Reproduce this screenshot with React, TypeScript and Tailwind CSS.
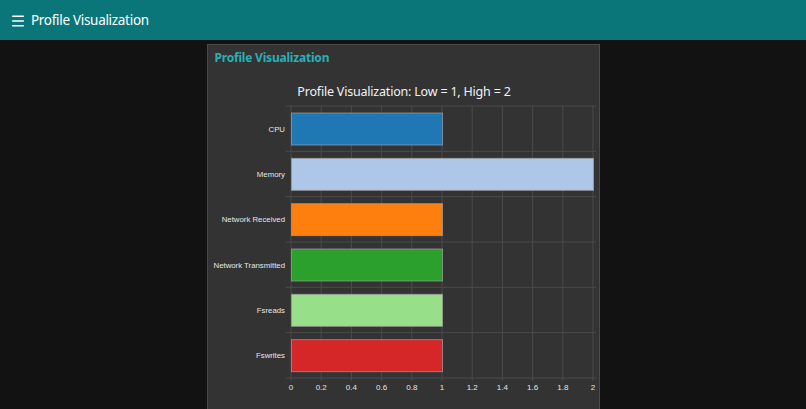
import { Menu } from "lucide-react";

interface Metric {
  name: string;
  value: number;
  color: string;
}

const metrics: Metric[] = [
  { name: "CPU", value: 1, color: "#1f77b4" },
  { name: "Memory", value: 2, color: "#aec7e8" },
  { name: "Network Received", value: 1, color: "#ff7f0e" },
  { name: "Network Transmitted", value: 1, color: "#2ca02c" },
  { name: "Fsreads", value: 1, color: "#98df8a" },
  { name: "Fswrites", value: 1, color: "#d62728" },
];

const ticks = [0, 0.2, 0.4, 0.6, 0.8, 1, 1.2, 1.4, 1.6, 1.8, 2];

// plot geometry (svg space)
const X0 = 83;
const UNIT = 151;
const TOP = 31;
const BAND = 45.33;
const BOTTOM = TOP + BAND * metrics.length;

function BarChart() {
  return (
    <svg width={391} height={340} className="block">
      <text
        x={196}
        y={21}
        textAnchor="middle"
        fill="#f2f2f2"
        fontSize={12.5}
        letterSpacing={-0.2}
        fontFamily="'Noto Sans', sans-serif"
      >
        Profile Visualization: Low = 1, High = 2
      </text>

      {/* grid */}
      {ticks.map((t) => (
        <line
          key={`v${t}`}
          x1={X0 + t * UNIT}
          x2={X0 + t * UNIT}
          y1={TOP}
          y2={BOTTOM + 3}
          stroke="#4b4b4b"
          strokeWidth={1}
        />
      ))}
      {metrics.map((_, i) => (
        <line
          key={`h${i}`}
          x1={X0 - 5}
          x2={X0 + 2 * UNIT + 3}
          y1={TOP + BAND * i}
          y2={TOP + BAND * i}
          stroke="#4b4b4b"
          strokeWidth={1}
        />
      ))}
      <line x1={X0 - 5} x2={X0 + 2 * UNIT + 3} y1={BOTTOM} y2={BOTTOM} stroke="#4b4b4b" />

      {/* bars */}
      {metrics.map((m, i) => (
        <g key={m.name}>
          <rect
            x={X0 + 0.5}
            y={TOP + BAND * i + 7}
            width={m.value * UNIT}
            height={32}
            fill={m.color}
            stroke="rgba(160,160,160,0.7)"
            strokeWidth={1}
          />
          <text
            x={77}
            y={TOP + BAND * i + BAND / 2 + 3}
            textAnchor="end"
            fill="#e6e6e6"
            fontSize={7.8}
            fontFamily="'Liberation Sans', Arial, sans-serif"
          >
            {m.name}
          </text>
        </g>
      ))}

      {/* x ticks */}
      {ticks.map((t) => (
        <text
          key={`t${t}`}
          x={X0 + t * UNIT}
          y={BOTTOM + 12}
          textAnchor="middle"
          fill="#e6e6e6"
          fontSize={8}
          fontFamily="'Liberation Sans', Arial, sans-serif"
        >
          {t}
        </text>
      ))}
    </svg>
  );
}

export default function App() {
  return (
    <div className="h-[409px] overflow-hidden bg-[#121212] font-['Noto_Sans',sans-serif]">
      {/* Top bar */}
      <header className="h-10 bg-[#0a767a] flex items-center pl-[10px] pt-[2px] gap-[5px] text-white">
        <Menu className="w-4 h-4" strokeWidth={2.2} />
        <span className="text-[13.5px] leading-none tracking-[-0.3px]">Profile Visualization</span>
      </header>

      {/* Card */}
      <div className="flex justify-center pt-1">
        <div className="w-[393px] h-[400px] bg-[#333333] border border-[#4a4a4a]">
          <div className="h-[30px] px-[7px] pt-[3px]">
            <h2 className="text-[12px] font-bold tracking-[-0.2px] text-[#2aafb8] leading-[20px]">
              Profile Visualization
            </h2>
          </div>
          <BarChart />
        </div>
      </div>
    </div>
  );
}
